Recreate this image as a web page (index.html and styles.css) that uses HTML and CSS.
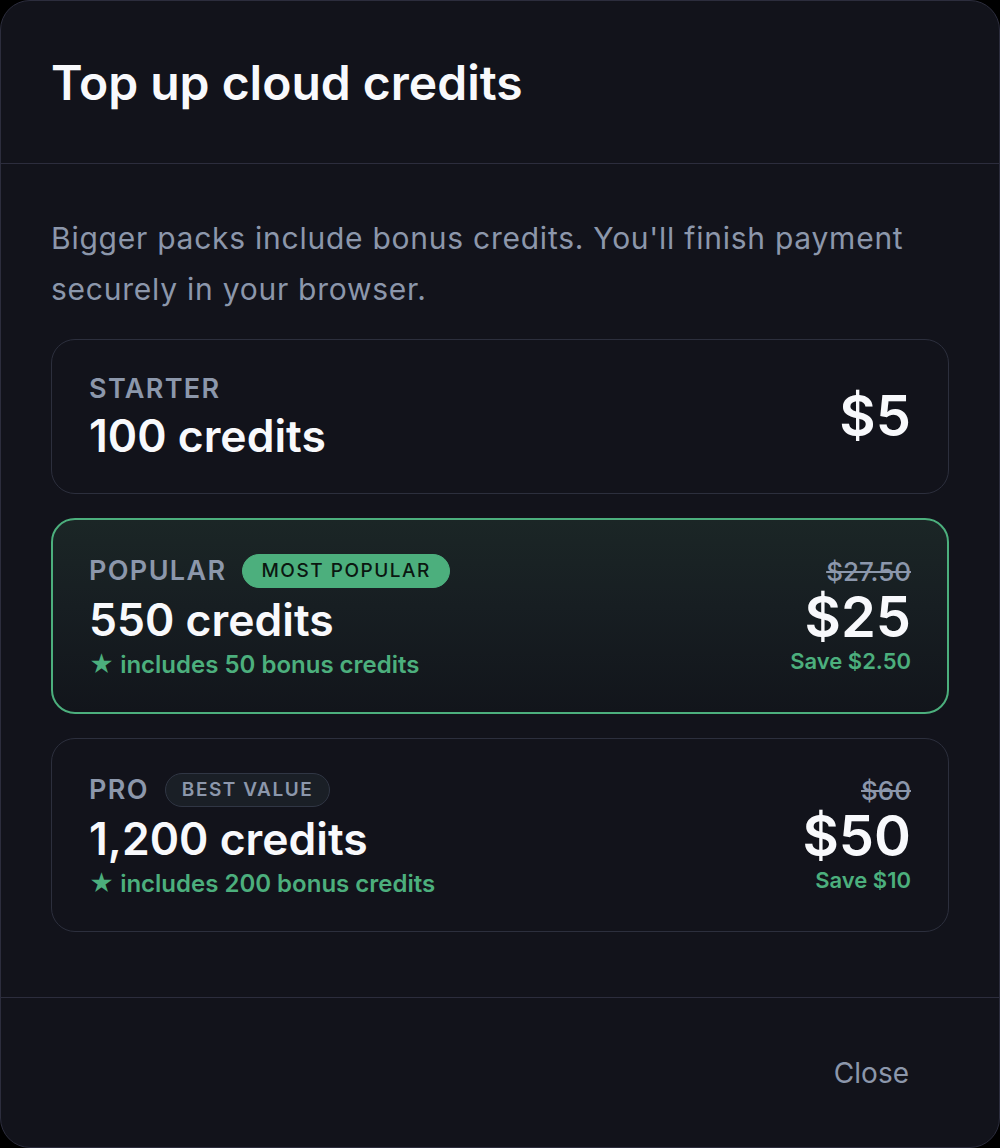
FILE: index.html
```html
<!DOCTYPE html>
<html lang="en">
<head>
  <meta charset="UTF-8" />
  <meta name="viewport" content="width=device-width, initial-scale=1.0" />
  <title>Top up cloud credits</title>
  <link rel="stylesheet" href="styles.css">
</head>
<body>
  <div class="dialog">
    <div class="dialog-header">
      <h1>Top up cloud credits</h1>
    </div>

    <div class="dialog-body">
      <p class="intro">Bigger packs include bonus credits. You'll finish payment securely in your browser.</p>

      <div class="pack pack-plain">
        <div class="pack-info">
          <div class="pack-name">STARTER</div>
          <div class="pack-credits">100 credits</div>
        </div>
        <div class="pack-price">
          <div class="price">$5</div>
        </div>
      </div>

      <div class="pack pack-popular">
        <div class="pack-info">
          <div class="pack-name has-badge">POPULAR <span class="badge badge-green">MOST POPULAR</span></div>
          <div class="pack-credits">550 credits</div>
          <div class="pack-bonus">★ includes 50 bonus credits</div>
        </div>
        <div class="pack-price">
          <div class="price-old">$27.50</div>
          <div class="price">$25</div>
          <div class="price-save">Save $2.50</div>
        </div>
      </div>

      <div class="pack">
        <div class="pack-info">
          <div class="pack-name has-badge">PRO <span class="badge badge-dark">BEST VALUE</span></div>
          <div class="pack-credits">1,200 credits</div>
          <div class="pack-bonus">★ includes 200 bonus credits</div>
        </div>
        <div class="pack-price">
          <div class="price-old">$60</div>
          <div class="price">$50</div>
          <div class="price-save">Save $10</div>
        </div>
      </div>
    </div>

    <div class="dialog-footer">
      <button class="close-btn">Close</button>
    </div>
  </div>
</body>
</html>
```

FILE: styles.css
```css
body {
  margin: 0;
  padding: 0;
  background: #000;
  font-family: Inter, 'Noto Sans', sans-serif;
  color: #f8f9fc;
}

.dialog {
  box-sizing: border-box;
  height: 1148px;
  border: 1px solid #2c2d3d;
  border-radius: 30px;
  background: #12131b;
  display: flex;
  flex-direction: column;
  overflow: hidden;
}

.dialog-header {
  box-sizing: border-box;
  height: 163px;
  padding: 0 50px;
  border-bottom: 1px solid #2c2d3d;
  display: flex;
  align-items: center;
}

.dialog-header h1 {
  margin: 0;
  font-size: 48px;
  font-weight: 600;
  color: #f8f9fc;
}

.dialog-body {
  flex: 1;
  padding: 49px 50px 0;
  display: flex;
  flex-direction: column;
  gap: 24px;
}

.intro {
  margin: 0;
  font-size: 30px;
  line-height: 51px;
  letter-spacing: 0.75px;
  color: #8c97ab;
}

.pack {
  border: 1px solid #2c2f3d;
  border-radius: 24px;
  padding: 29px 37px;
  display: flex;
  justify-content: space-between;
  align-items: center;
}

.pack-plain {
  padding-bottom: 30px;
}

.pack-popular {
  border: 2px solid #4caf7d;
  padding: 29px 36px;
  background: linear-gradient(180deg, #1b2626 0%, #171e22 45%, #12151b 100%);
}

.pack-name {
  display: flex;
  align-items: center;
  gap: 16px;
  font-size: 27px;
  font-weight: 600;
  letter-spacing: 0.05em;
  line-height: 40px;
  color: #8c97ab;
}

.pack-name.has-badge {
  line-height: 44px;
}

.pack-credits {
  font-size: 44.5px;
  font-weight: 600;
  line-height: 54px;
}

.pack-bonus {
  font-size: 24px;
  font-weight: 600;
  line-height: 36px;
  color: #4caf7d;
}

.badge {
  font-size: 19px;
  font-weight: 500;
  letter-spacing: 0.08em;
  line-height: 32px;
  padding: 0 18px;
  border-radius: 17px;
}

.badge-green {
  background: #4caf7d;
  color: #0b1711;
  border: 1px solid #4caf7d;
}

.badge-dark {
  background: #1a1f26;
  color: #8c97ab;
  border: 1px solid #303644;
  font-weight: 600;
  padding: 0 16px;
}

.pack-price {
  text-align: right;
}

.price-old {
  font-size: 26px;
  font-weight: 500;
  line-height: 30px;
  color: #8c97ab;
  text-decoration: line-through;
}

.price {
  font-size: 56px;
  font-weight: 600;
  line-height: 60px;
}

.price-save {
  font-size: 22px;
  font-weight: 600;
  line-height: 28px;
  color: #4caf7d;
}

.dialog-footer {
  box-sizing: border-box;
  height: 150px;
  border-top: 1px solid #2c2d3d;
  padding: 0 50px;
  display: flex;
  align-items: center;
  justify-content: flex-end;
}

.close-btn {
  background: none;
  border: none;
  font-family: inherit;
  font-size: 28px;
  color: #8c97ab;
  padding: 12px 40px;
  cursor: pointer;
}
```
